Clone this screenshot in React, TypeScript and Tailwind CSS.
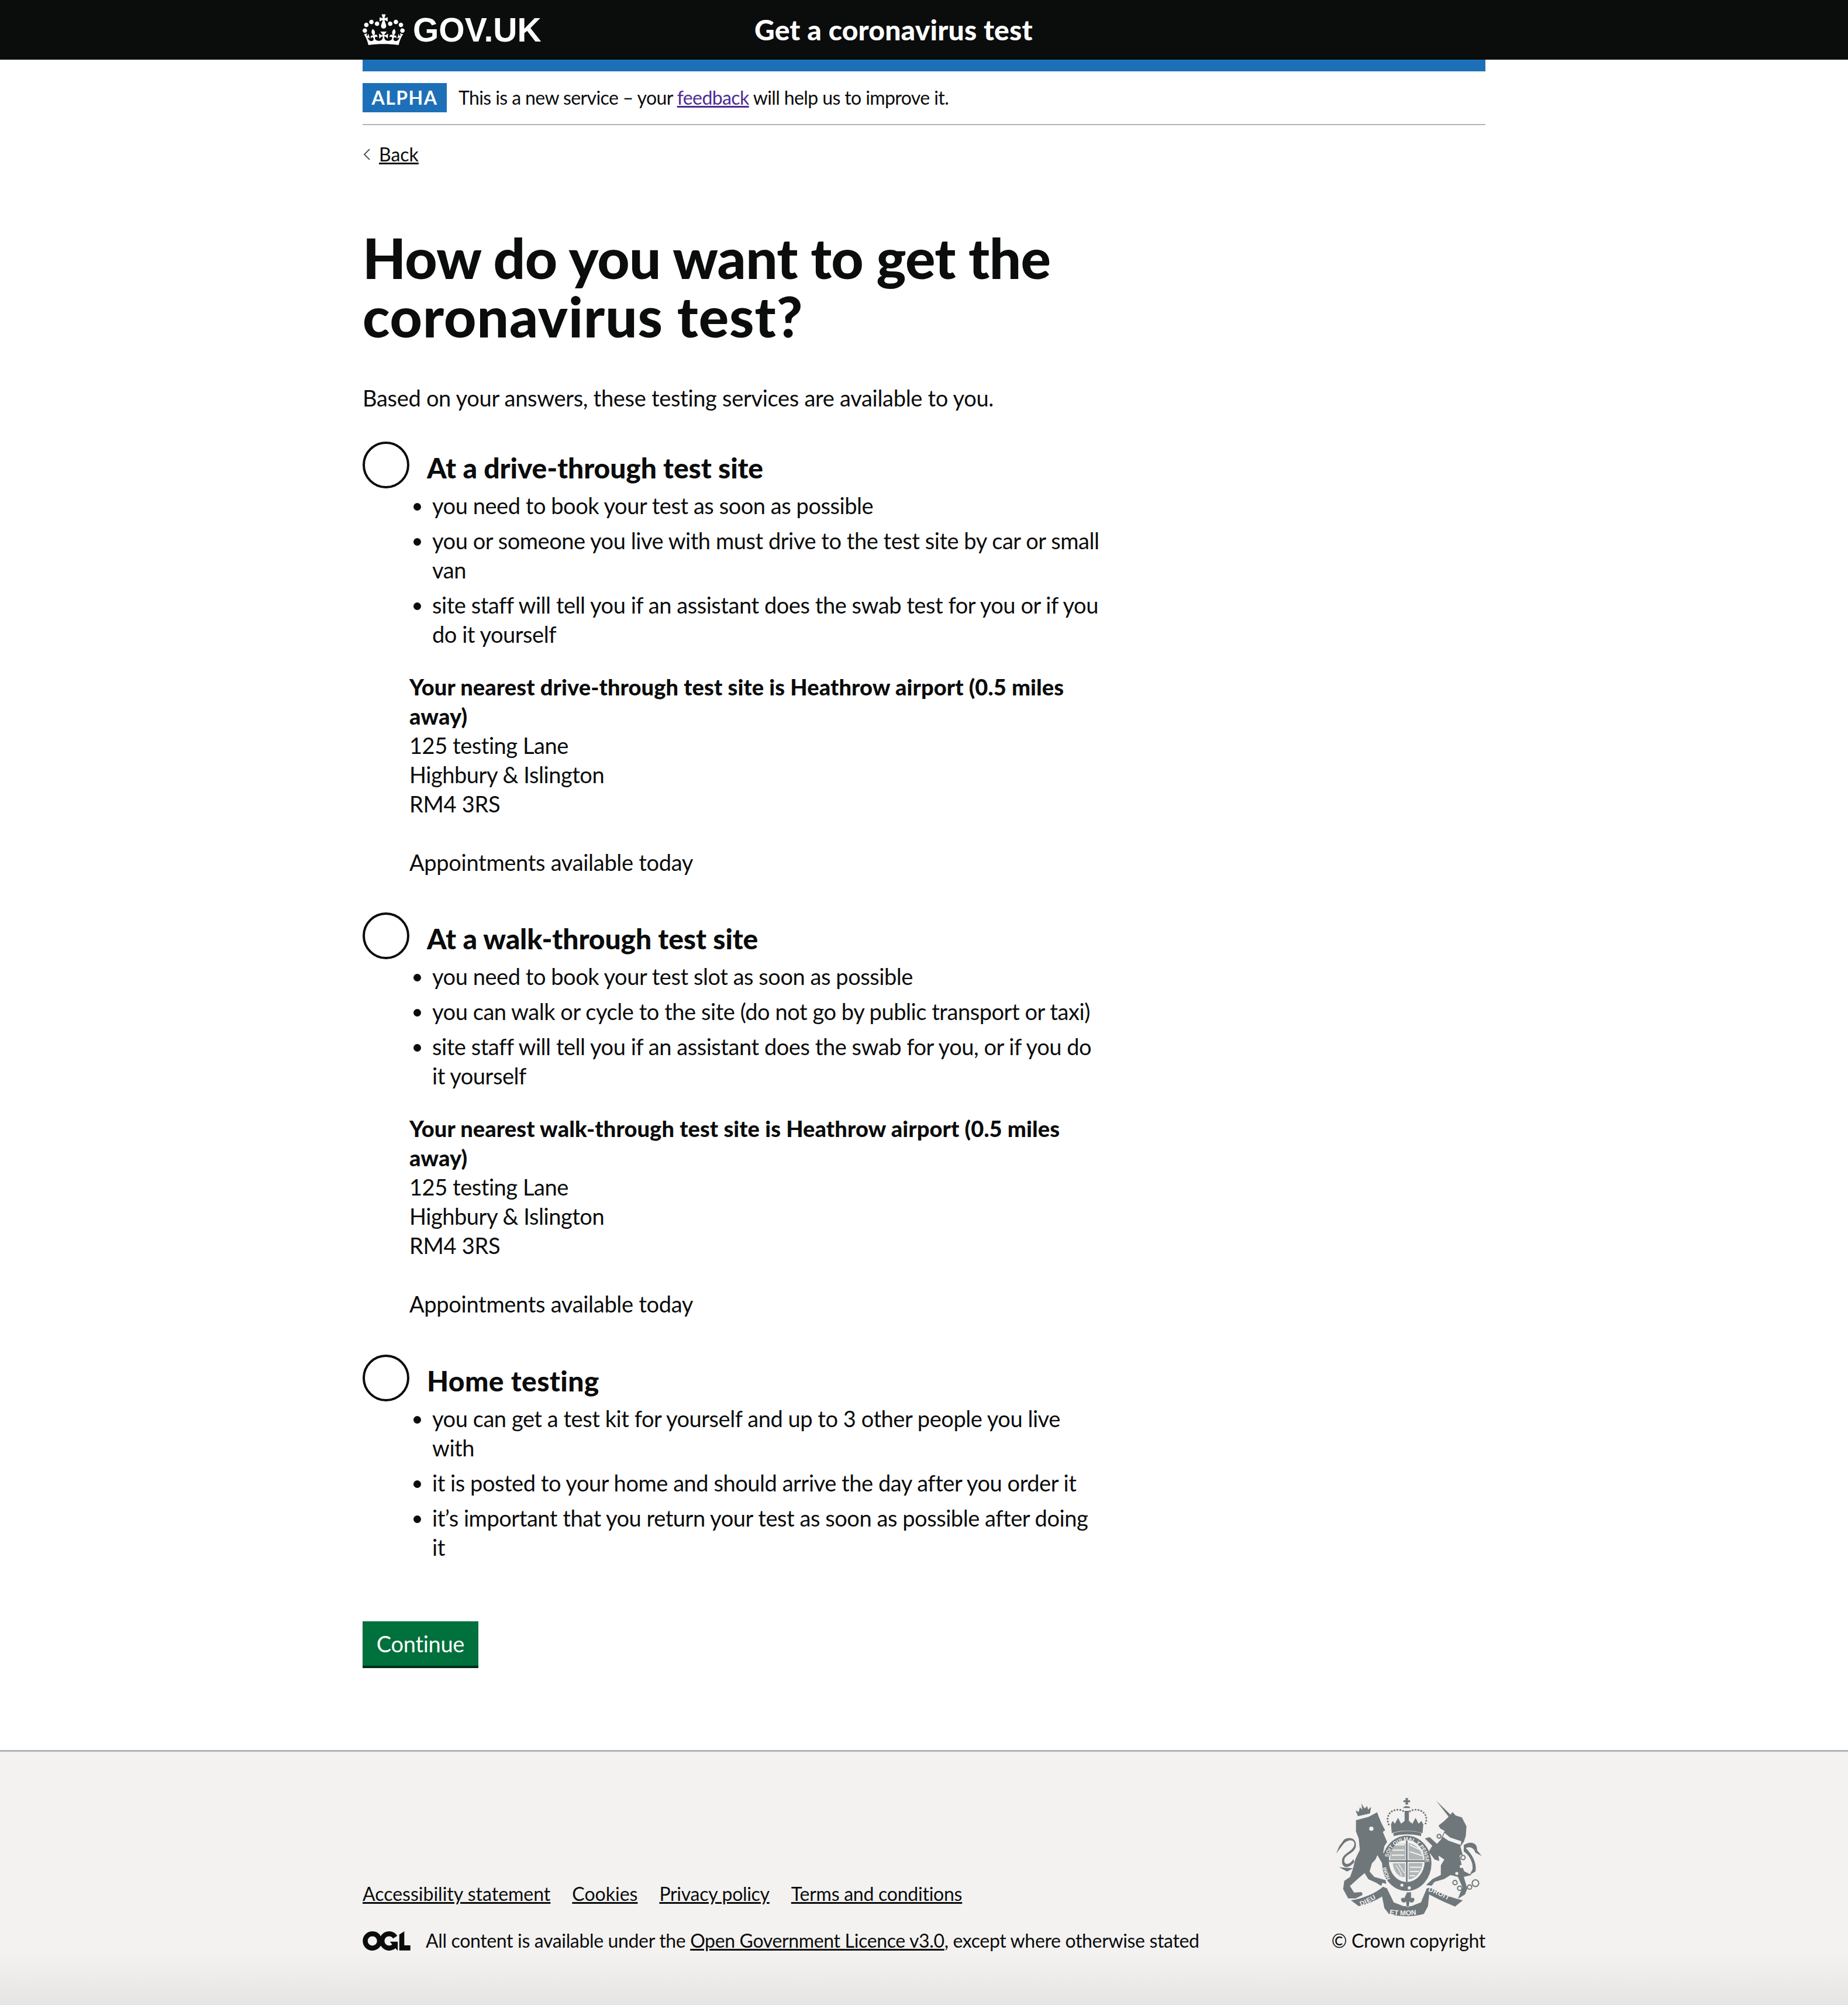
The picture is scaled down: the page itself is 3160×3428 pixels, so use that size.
const T = "font-['Lato','Noto_Sans',sans-serif]";

function Crown() {
  return (
    <svg viewBox="0 0 132 97" className="w-[72px] h-[60px] fill-white shrink-0">
      <path fillRule="evenodd" d="M25 30.2c3.5 1.5 7.7-.2 9.1-3.7 1.5-3.6-.2-7.8-3.9-9.2-3.6-1.4-7.6.3-9.1 3.9-1.4 3.5.3 7.5 3.9 9zM9 39.5c3.6 1.5 7.8-.2 9.2-3.7 1.5-3.6-.2-7.8-3.9-9.1-3.6-1.5-7.6.2-9.1 3.8-1.4 3.5.3 7.5 3.8 9zM4.4 57.2c3.5 1.5 7.7-.2 9.1-3.8 1.5-3.6-.2-7.7-3.9-9.1-3.5-1.5-7.6.3-9.1 3.8-1.4 3.5.3 7.6 3.9 9.1zm38.3-21.4c3.5 1.5 7.7-.2 9.1-3.8 1.5-3.6-.2-7.7-3.9-9.1-3.6-1.5-7.6.3-9.1 3.8-1.3 3.6.4 7.7 3.9 9.1zm64.4-5.6c-3.6 1.5-7.8-.2-9.1-3.7-1.5-3.6.2-7.8 3.8-9.2 3.6-1.4 7.7.3 9.2 3.9 1.3 3.5-.4 7.5-3.9 9zm15.9 9.3c-3.6 1.5-7.7-.2-9.1-3.7-1.5-3.6.2-7.8 3.7-9.1 3.6-1.5 7.7.2 9.2 3.8 1.5 3.5-.3 7.5-3.8 9zm4.7 17.7c-3.6 1.5-7.8-.2-9.2-3.8-1.5-3.6.2-7.7 3.9-9.1 3.6-1.5 7.7.3 9.2 3.8 1.3 3.5-.4 7.6-3.9 9.1zM89.3 35.8c-3.6 1.5-7.8-.2-9.2-3.8-1.4-3.6.2-7.7 3.9-9.1 3.6-1.5 7.7.3 9.2 3.8 1.4 3.6-.3 7.7-3.9 9.1zM69.7 17.7l8.9 4.7V9.3l-8.9 2.8c-.2-.3-.5-.6-.9-.9L72.4 0H59.6l3.5 11.2c-.3.3-.6.5-.9.9l-8.8-2.8v13.1l8.8-4.7c.3.3.6.7.9.9l-5 15.4v.1c-.2.8-.4 1.6-.4 2.4 0 4.1 3.1 7.5 7 8.1h.2c.3 0 .7.1 1 .1.4 0 .7 0 1-.1h.2c4-.6 7.1-4.1 7.1-8.1 0-.8-.1-1.7-.4-2.4V34l-5.1-15.4c.4-.2.7-.6 1-.9zM66 92.8c16.9 0 32.8 1.1 47.1 3.2 4-16.9 8.9-26.7 14-33.5l-9.6-3.4c1 4.9 1.1 7.2 0 10.2-1.5-1.4-3-4.3-4.2-8.7L108.6 76c2.8-2 5-3.2 7.5-3.3-4.4 9.4-10 11.9-13.6 11.2-4.3-.8-6.3-4.6-5.6-7.9 1-4.7 5.7-5.9 8-.5 4.3-8.7-3-11.4-7.6-8.8 7.1-7.2 7.9-13.5 2.1-21.1-8 6.1-8.1 12.3-4.5 20.8-4.7-5.4-12.1-2.5-9.5 6.2 3.4-5.2 7.9-2 7.2 3.1-.6 4.3-6.4 7.8-13.5 7.2-10.3-.9-10.9-8-11.2-13.8 2.5-.5 7.1 1.8 11 7.3L80.2 60c-4.1 4.4-8 5.3-12.3 5.4 1.4-4.4 8-11.6 8-11.6H55.5s6.4 7.2 7.9 11.6c-4.2-.1-8-1-12.3-5.4l1.4 16.4c3.9-5.5 8.5-7.7 10.9-7.3-.3 5.8-.9 12.8-11.1 13.8-7.2.6-12.9-2.9-13.5-7.2-.7-5 3.8-8.3 7.1-3.1 2.7-8.7-4.6-11.6-9.4-6.2 3.7-8.5 3.6-14.7-4.6-20.8-5.8 7.6-5 13.9 2.2 21.1-4.7-2.6-11.9.1-7.7 8.8 2.3-5.5 7.1-4.2 8.1.5.7 3.3-1.3 7.1-5.7 7.9-3.5.7-9-1.8-13.5-11.2 2.5.1 4.7 1.3 7.5 3.3l-4.7-15.4c-1.2 4.4-2.7 7.2-4.3 8.7-1.1-3-.9-5.3 0-10.2l-9.5 3.4c5 6.9 9.9 16.7 14 33.5 14.8-2.1 30.8-3.2 47.7-3.2z" />
    </svg>
  );
}

function Ogl() {
  return (
    <svg viewBox="0 0 483.2 195.7" className="w-[82px] h-[33px] fill-[#0b0c0c] shrink-0">
      <path d="M421.5 142.8V.1l-50.7 32.3v161.1h112.4v-50.7zm-122.3-9.6A47.12 47.12 0 0 1 221 97.8c0-26 21.1-47.1 47.1-47.1 16.7 0 31.4 8.7 39.7 21.8l42.7-27.2A97.63 97.63 0 0 0 268.1 0c-36.5 0-68.3 20.1-85.1 49.7A98 98 0 0 0 97.8 0C43.9 0 0 43.9 0 97.8s43.9 97.8 97.8 97.8c36.5 0 68.3-20.1 85.1-49.7a97.76 97.76 0 0 0 149.6 25.4l19.4 22.2h3v-87.8h-80l24.3 27.5zM97.8 145c-26 0-47.1-21.1-47.1-47.1s21.1-47.1 47.1-47.1 47.2 21 47.2 47S123.8 145 97.8 145" />
    </svg>
  );
}

function Crest() {
  const g = "#6f777b";
  const bg = "#f3f2f1";
  return (
    <svg viewBox="130 95 755 625" className="w-[252px] h-[208px] mr-[5px]">
      <g fill={g} stroke="none">
        <path d="M236 218 L300 202 L345 178 L352 198 L366 232 L386 270 L374 278 L396 330 L382 352 L376 385 L408 442 L386 466 L365 430 L346 398 L336 420 L318 440 L306 482 L330 510 L388 526 L392 546 L372 540 L366 556 L340 540 L300 522 L280 490 L245 520 L205 556 L226 590 L266 588 L270 602 L235 620 L196 620 L170 572 L176 530 L206 510 L220 470 L232 420 L256 370 L250 312 L236 276 Z" />
        <path d="M228 432 C195 475 158 462 165 420 C172 385 226 378 228 340 C228 315 190 315 168 345 L134 390 L150 352 L175 318 C200 302 236 310 236 345 C236 390 178 390 176 425 C174 450 205 450 222 418 Z M222 465 L150 460 L190 482 Z" />
        <path d="M246 198 L234 168 L250 176 L256 152 L268 164 L264 132 L270 142 L280 158 L294 146 L298 164 L314 150 L308 184 Z" />
        <path d="M489 105 h16 l-3 11 h12 v-5 v20 v-5 h-12 l3 12 h-16 l3 -12 h-12 v5 v-20 v5 h12 Z" />
        <path d="M478 156 a20 14 0 0 1 38 0 Z" />
        <path d="M416 240 L424 222 L436 236 L452 206 L468 236 L486 222 L486 170 L508 170 L508 222 L526 236 L542 206 L558 236 L572 222 L582 240 L578 285 C530 268 465 268 420 285 Z" />
        <path d="M428 285 C470 270 530 270 572 285 L570 300 C530 288 470 288 430 300 Z" />
        <ellipse cx="497" cy="440" rx="127" ry="142" />
        <path d="M648 118 L722 190 L732 176 L748 194 L780 204 L804 250 L800 300 L790 330 L772 352 L784 395 L768 400 L780 450 L792 480 L830 500 L790 510 L808 570 L796 600 L760 622 L772 590 L784 565 L760 510 L722 500 L690 520 L640 535 L625 555 L596 552 L630 520 L672 500 L672 450 L690 420 L660 400 L664 428 L640 420 L610 380 L628 350 L590 312 L615 305 L652 340 L672 318 L692 274 L670 262 L660 246 L690 222 L712 200 Z" />
        <path d="M790 346 C830 320 862 340 858 372 L882 402 L850 385 C842 360 820 350 800 362 C830 390 860 440 850 482 L820 500 L835 470 C840 430 810 390 790 380 Z" />
      </g>
      <path d="M404 240 C385 190 420 160 460 165 C480 168 490 178 497 185 C505 178 515 168 535 165 C575 160 612 190 592 240" fill="none" stroke={g} strokeWidth="10" strokeLinecap="round" strokeDasharray="0 15" />
      <ellipse cx="497" cy="428" rx="92" ry="108" fill={bg} />
      <path d="M497 322 V535 M406 428 H588" stroke={g} strokeWidth="8" fill="none" />
      <g fill={g}>
        <path d="M428 340 L490 340 L490 420 L412 420 C412 385 418 360 428 340 Z M506 336 C540 340 575 370 582 420 L506 420 Z" opacity="0.5" />
        <path d="M425 440 L488 440 L488 510 C455 515 430 480 425 440 Z M506 438 L578 438 C575 480 545 520 506 522 Z" opacity="0.5" />
      </g>
      <path d="M436 345 L485 345 M424 372 L485 372 M420 398 L485 398 M512 345 L560 368 M512 380 L575 400 M512 460 L570 460 M512 482 L560 482 M512 504 L540 504" stroke={bg} strokeWidth="6" fill="none" />
      <path d="M440 450 C460 470 465 490 470 505 M455 445 L485 490" stroke={bg} strokeWidth="4" fill="none" />
      <defs>
        <path id="gt" d="M402 410 A97 112 0 1 1 565 515" />
        <path id="rl" d="M262 660 C300 644 345 620 378 592" />
        <path id="rc" d="M408 702 C450 710 545 710 590 694" />
        <path id="rr" d="M606 582 C650 598 705 626 755 655" />
      </defs>
      <text fontFamily="Liberation Sans, sans-serif" fontSize="27" fontWeight="700" fill={bg}><textPath href="#gt">SOIT QUI MAL Y PENSE</textPath></text>
      <text transform="translate(412 520) rotate(-110)" fontFamily="Liberation Sans, sans-serif" fontSize="27" fontWeight="700" fill={bg}>HONI</text>
      <circle cx="472" cy="552" r="8" fill={bg} />
      <circle cx="510" cy="566" r="8" fill={bg} />
      <g fill={g}>
        <path d="M210 630 C280 620 340 590 375 560 L395 568 L430 640 L480 660 L520 660 L570 640 L600 568 L620 565 C660 590 720 615 785 630 L745 662 C690 640 640 615 612 600 L606 660 L585 700 C530 716 460 716 405 700 L382 670 L370 610 C330 635 290 650 250 660 Z" />
        <path d="M498 588 h22 v30 c14 -8 24 8 12 20 c-6 6 -18 6 -20 -2 l-4 28 l-12 0 l-4 -28 c-2 8 -14 8 -20 2 c-12 -12 -2 -28 12 -20 Z" stroke={bg} strokeWidth="2" />
      </g>
      <text fontFamily="Liberation Sans, sans-serif" fontSize="34" fontWeight="700" fill={bg} letterSpacing="2"><textPath href="#rl">DIEU</textPath></text>
      <text fontFamily="Liberation Sans, sans-serif" fontSize="36" fontWeight="700" fill={bg}><textPath href="#rc">ET MON</textPath></text>
      <text fontFamily="Liberation Sans, sans-serif" fontSize="34" fontWeight="700" fill={bg} letterSpacing="2"><textPath href="#rr">DROIT</textPath></text>
      <g fill="none" stroke={g} strokeWidth="6">
        <circle cx="663" cy="301" r="10" />
        <circle cx="652" cy="385" r="10" />
        <circle cx="745" cy="539" r="11" />
        <circle cx="769" cy="568" r="11" />
        <circle cx="820" cy="562" r="11" />
        <circle cx="850" cy="542" r="17" />
        <circle cx="786" cy="410" r="11" />
      </g>
      <circle cx="777" cy="456" r="8" fill={bg} />
      <circle cx="754" cy="492" r="8" fill={bg} />
      <path d="M690 280 L720 305 L780 325 L775 348 L710 325 L680 305 Z" fill={bg} stroke={g} strokeWidth="4" />
      <circle cx="315" cy="262" r="11" fill={bg} />
    </svg>
  );
}

function Li({ children }: { children: React.ReactNode }) {
  return <li className="mb-[10px] last:mb-0 list-disc">{children}</li>;
}

function Option({ label, labelTracking, items, nearest, pb }: { label: string; labelTracking: string; items: React.ReactNode[]; nearest?: React.ReactNode; pb: string }) {
  return (
    <div className={pb}>
      <div className="flex items-start">
        <span className="w-[80px] h-[80px] rounded-full border-[4px] border-[#0b0c0c] shrink-0" />
        <span className={`ml-[30px] mt-[20px] text-[48px] leading-[50px] font-black ${labelTracking}`}>{label}</span>
      </div>
      <ul className="pl-[119px] mt-[4px] tracking-[-0.45px]">
        {items.map((it, i) => <Li key={i}>{it}</Li>)}
      </ul>
      {nearest && (
        <div className="pl-[80px] mt-[40px]">
          <div className="font-black tracking-[0.1px]">{nearest}</div>
          <div className="tracking-[-0.45px]">125 testing Lane</div>
          <div className="tracking-[-0.45px]">Highbury &amp; Islington</div>
          <div>RM4 3RS</div>
          <div className="mt-[50px]">Appointments available today</div>
        </div>
      )}
    </div>
  );
}

export default function App() {
  return (
    <div className={`${T} min-h-[3428px] flex flex-col bg-white text-[#0b0c0c] text-[38px] leading-[50px] tracking-[-0.3px] whitespace-nowrap`}>
      <header className="h-[102px] bg-[#0b0c0c] text-white shrink-0">
        <div className="w-[1920px] mx-auto h-full flex items-center">
          <div className="w-[670px] flex items-center">
            <Crown />
            <span className="ml-[14px] font-['Liberation_Sans',sans-serif] font-bold text-[57px] leading-[60px] tracking-normal">GOV.UK</span>
          </div>
          <span className="text-[48px] leading-[50px] font-black tracking-[0.2px]">Get a coronavirus test</span>
        </div>
      </header>
      <div className="w-[1920px] mx-auto">
        <div className="h-[20px] bg-[#1d70b8]" />
        <div className="h-[92px] border-b-2 border-[#b1b4b6] flex items-center">
          <span className="bg-[#1d70b8] text-white font-bold text-[32px] leading-[50px] h-[50px] w-[144px] text-center tracking-[1.5px]">ALPHA</span>
          <span className="ml-[20px] text-[32px] leading-[40px] tracking-[-0.6px]">This is a new service – your <a className="underline text-[#4c2c92]">feedback</a> will help us to improve it.</span>
        </div>
        <div className="mt-[30px] text-[32px] leading-[40px] flex items-center tracking-normal">
          <svg viewBox="0 0 14 22" className="w-[14px] h-[22px]"><path d="M12 2 L3 11 L12 20" fill="none" stroke="#505a5f" strokeWidth="2" /></svg>
          <a className="underline ml-[14px]">Back</a>
        </div>

        <main className="w-[1260px] pt-[106px] pb-[140px]">
          <h1 className="text-[96px] leading-[100px] font-black mb-[65px]">
            <span className="block tracking-[-0.6px]">How do you want to get the</span>
            <span className="block tracking-[1px]">coronavirus test?</span>
          </h1>
          <p className="mb-[50px]">Based on your answers, these testing services are available to you.</p>
          <Option
            label="At a drive-through test site"
            labelTracking="tracking-[-0.1px]"
            pb="pb-[61px]"
            items={[
              "you need to book your test as soon as possible",
              <>you or someone you live with must drive to the test site by car or small<br />van</>,
              <>site staff will tell you if an assistant does the swab test for you or if you<br />do it yourself</>,
            ]}
            nearest={<>Your nearest drive-through test site is Heathrow airport (0.5 miles<br />away)</>}
          />
          <Option
            label="At a walk-through test site"
            labelTracking="tracking-[-0.1px]"
            pb="pb-[62px]"
            items={[
              "you need to book your test slot as soon as possible",
              "you can walk or cycle to the site (do not go by public transport or taxi)",
              <>site staff will tell you if an assistant does the swab for you, or if you do<br />it yourself</>,
            ]}
            nearest={<>Your nearest walk-through test site is Heathrow airport (0.5 miles<br />away)</>}
          />
          <Option
            label="Home testing"
            labelTracking="tracking-[0.4px]"
            pb="pb-[102px]"
            items={[
              <>you can get a test kit for yourself and up to 3 other people you live<br />with</>,
              "it is posted to your home and should arrive the day after you order it",
              <>it’s important that you return your test as soon as possible after doing<br />it</>,
            ]}
          />
          <button className="block w-[198px] h-[80px] bg-[#00703c] text-white border-b-[4px] border-[#002d18] text-[38px] leading-[50px] text-center">Continue</button>
        </main>
      </div>
      <footer className="relative flex-1 bg-[#f3f2f1] border-t-[3px] border-[#b1b4b6] text-[32px] leading-[40px]">
        <div className="w-[1920px] mx-auto pt-[76px] flex justify-between items-end">
          <div>
            <div className="flex gap-[37px] tracking-normal">
              <a className="underline">Accessibility statement</a>
              <a className="underline">Cookies</a>
              <a className="underline tracking-[-0.3px]">Privacy policy</a>
              <a className="underline tracking-[-0.25px]">Terms and conditions</a>
            </div>
            <div className="mt-[40px] flex items-center tracking-[-0.35px]">
              <Ogl />
              <span className="ml-[26px]">All content is available under the <a className="underline">Open Government Licence v3.0</a>, except where otherwise stated</span>
            </div>
          </div>
          <div className="flex flex-col items-end">
            <Crest />
            <span className="mt-[19px]">© Crown copyright</span>
          </div>
        </div>
        <div className="absolute inset-x-0 bottom-0 h-[90px] bg-gradient-to-b from-[#f3f2f1] to-[#e6e5e3]" />
      </footer>
    </div>
  );
}
